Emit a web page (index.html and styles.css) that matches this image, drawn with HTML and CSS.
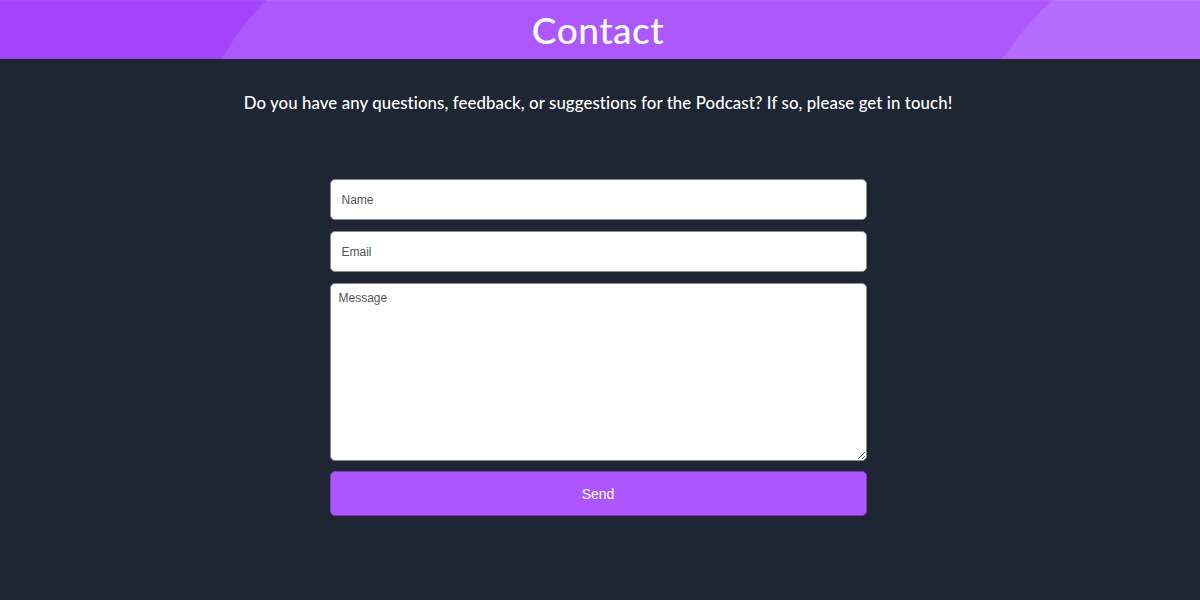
FILE: index.html
```html
<!DOCTYPE html>
<html>
<head>
<meta charset="utf-8">
<link rel="stylesheet" href="styles.css">
</head>
<body>
<header class="hero">
  <svg class="hero-bg" viewBox="0 0 1200 59" preserveAspectRatio="none" aria-hidden="true">
    <rect x="0" y="0" width="1200" height="59" fill="#a443fe"/>
    <path d="M267 0 Q240 25 222 59 L1200 59 L1200 0 Z" fill="#ad58fe"/>
    <path d="M1053 0 Q1025 25 1002 59 L1200 59 L1200 0 Z" fill="#b46bfe"/>
    <rect x="0" y="0" width="1200" height="1" fill="#ffffff" fill-opacity="0.08"/>
  </svg>
  <h1 class="title">Contact</h1>
</header>
<main class="content">
  <p class="intro">Do you have any questions, feedback, or suggestions for the Podcast? If so, please get in touch!</p>
  <form class="form">
    <input class="field" type="text" placeholder="Name">
    <input class="field" type="email" placeholder="Email">
    <textarea class="field area" placeholder="Message"></textarea>
    <button class="send" type="button">Send</button>
  </form>
</main>
</body>
</html>
```
FILE: styles.css
```css
html, body {
  margin: 0;
  padding: 0;
  background: #1f2633;
  height: 100%;
}
body {
  font-family: Lato, "Noto Sans", sans-serif;
  color: #fff;
}
.hero {
  position: relative;
  height: 59px;
  display: flex;
  align-items: center;
  justify-content: center;
  padding-right: 4px;
  overflow: hidden;
}
.hero-bg {
  position: absolute;
  inset: 0;
  width: 100%;
  height: 100%;
}
.title {
  position: relative;
  margin: 0;
  font-family: Lato, "Noto Sans", sans-serif;
  font-weight: 500;
  font-size: 37px;
  letter-spacing: 0.5px;
  color: #fff;
  line-height: 1;
}
.content {
  display: flex;
  flex-direction: column;
  align-items: center;
  padding-right: 4px;
}
.intro {
  margin: 33px 0 0;
  font-size: 16.8px;
  font-weight: 500;
  letter-spacing: 0.1px;
  line-height: 22px;
}
.form {
  margin-top: 65px;
  width: 537px;
  display: flex;
  flex-direction: column;
  gap: 11px;
}
.field {
  box-sizing: border-box;
  height: 41px;
  width: 100%;
  margin: 0;
  border: 1px solid #888c93;
  border-radius: 5px;
  background: #fff;
  padding: 0 11px;
  font-family: "Liberation Sans", Arial, sans-serif;
  font-size: 12px;
  color: #333;
}
.field::placeholder {
  color: #555;
}
.area {
  height: 178px;
  padding: 7px 8px;
  resize: vertical;
}
.send {
  height: 45px;
  margin-top: -1px;
  border: 1px solid #7d3bb8;
  border-radius: 5px;
  background: #ad55fe;
  color: #fff;
  font-family: "Liberation Sans", Arial, sans-serif;
  font-size: 14px;
  cursor: pointer;
}
```
